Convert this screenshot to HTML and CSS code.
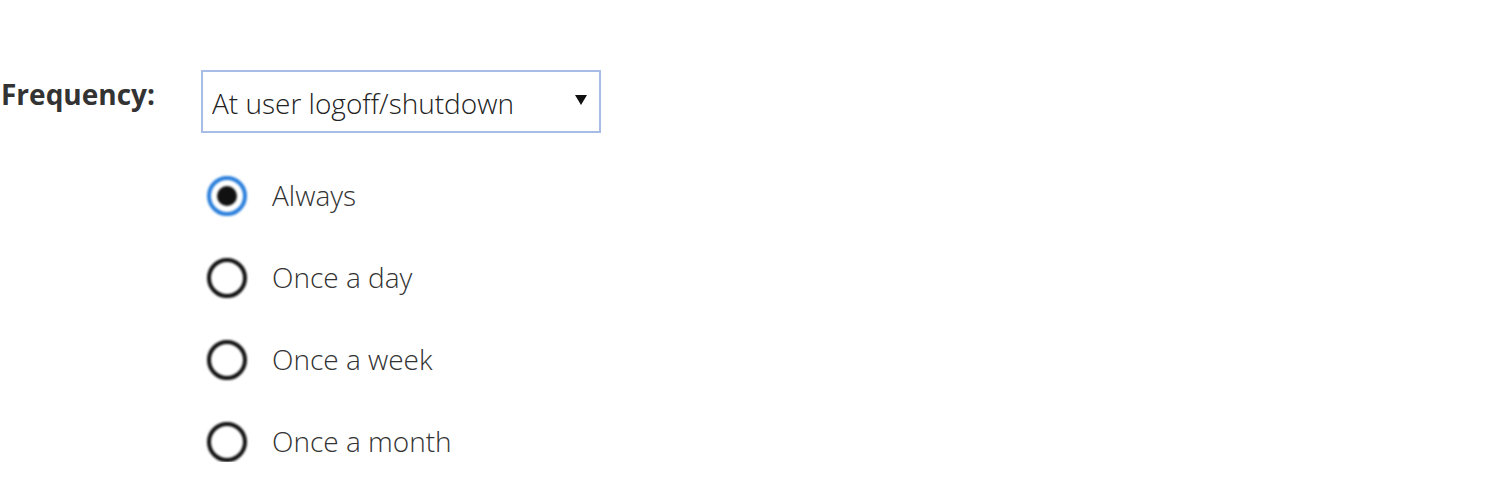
FILE: index.html
```html
<!DOCTYPE html>
<html lang="en">
<head>
  <meta charset="UTF-8">
  <title>Frequency</title>
  <link rel="stylesheet" href="styles.css">
</head>
<body>

  <form class="settings">
    <div class="row">
      <label class="label" for="frequency">Frequency:</label>
      <div class="field">
        <div class="select-wrap">
          <select id="frequency" class="select">
            <option>At user logoff/shutdown</option>
            <option>At user logon</option>
          </select>
          <svg class="arrow" width="12" height="10" viewBox="0 0 12 10"><path d="M0 0h12L6 10z" fill="#111"/></svg>
        </div>

        <div class="radios">
          <label class="radio"><input type="radio" name="when" checked><span>Always</span></label>
          <label class="radio"><input type="radio" name="when"><span>Once a day</span></label>
          <label class="radio"><input type="radio" name="when"><span>Once a week</span></label>
          <label class="radio"><input type="radio" name="when"><span>Once a month</span></label>
        </div>
      </div>
    </div>
  </form>

</body>
</html>
```

FILE: styles.css
```css
body {
  margin: 0;
  background: #fff;
  font-family: 'Open Sans', 'Segoe UI', sans-serif;
  color: #333;
}

.settings {
  padding-top: 70px;
}

.row {
  display: flex;
  align-items: flex-start;
}

.label {
  width: 200px;
  padding-left: 1px;
  padding-top: 5px;
  font-size: 28px;
  font-weight: bold;
  line-height: 38px;
  color: #333;
}

.field {
  display: flex;
  flex-direction: column;
}

.select-wrap {
  position: relative;
  width: 400px;
}

.select {
  appearance: none;
  -webkit-appearance: none;
  width: 400px;
  height: 63px;
  margin: 0;
  padding: 3px 40px 0 9px;
  border: 2px solid #a8bde6;
  border-radius: 0;
  background: #fff;
  font-family: inherit;
  font-size: 28px;
  font-weight: 300;
  color: #222;
  outline: none;
}

.arrow {
  position: absolute;
  left: 374px;
  top: 25px;
  pointer-events: none;
}

.radios {
  display: flex;
  flex-direction: column;
  gap: 42px;
  margin-top: 43px;
  padding-left: 6px;
}

.radio {
  display: flex;
  align-items: center;
  gap: 25px;
  height: 40px;
  font-size: 28px;
  font-weight: 300;
  color: #333;
}

.radio input {
  appearance: none;
  -webkit-appearance: none;
  width: 40px;
  height: 40px;
  margin: 0;
  border: 4px solid #111;
  border-radius: 50%;
  background: #fff;
  filter: blur(0.8px);
  display: grid;
  place-items: center;
}

.radio input:checked {
  border-color: #2a7fdc;
}

.radio input:checked::after {
  content: "";
  width: 20px;
  height: 20px;
  border-radius: 50%;
  background: #111;
}

.radio span {
  margin-top: -3px;
}
```
